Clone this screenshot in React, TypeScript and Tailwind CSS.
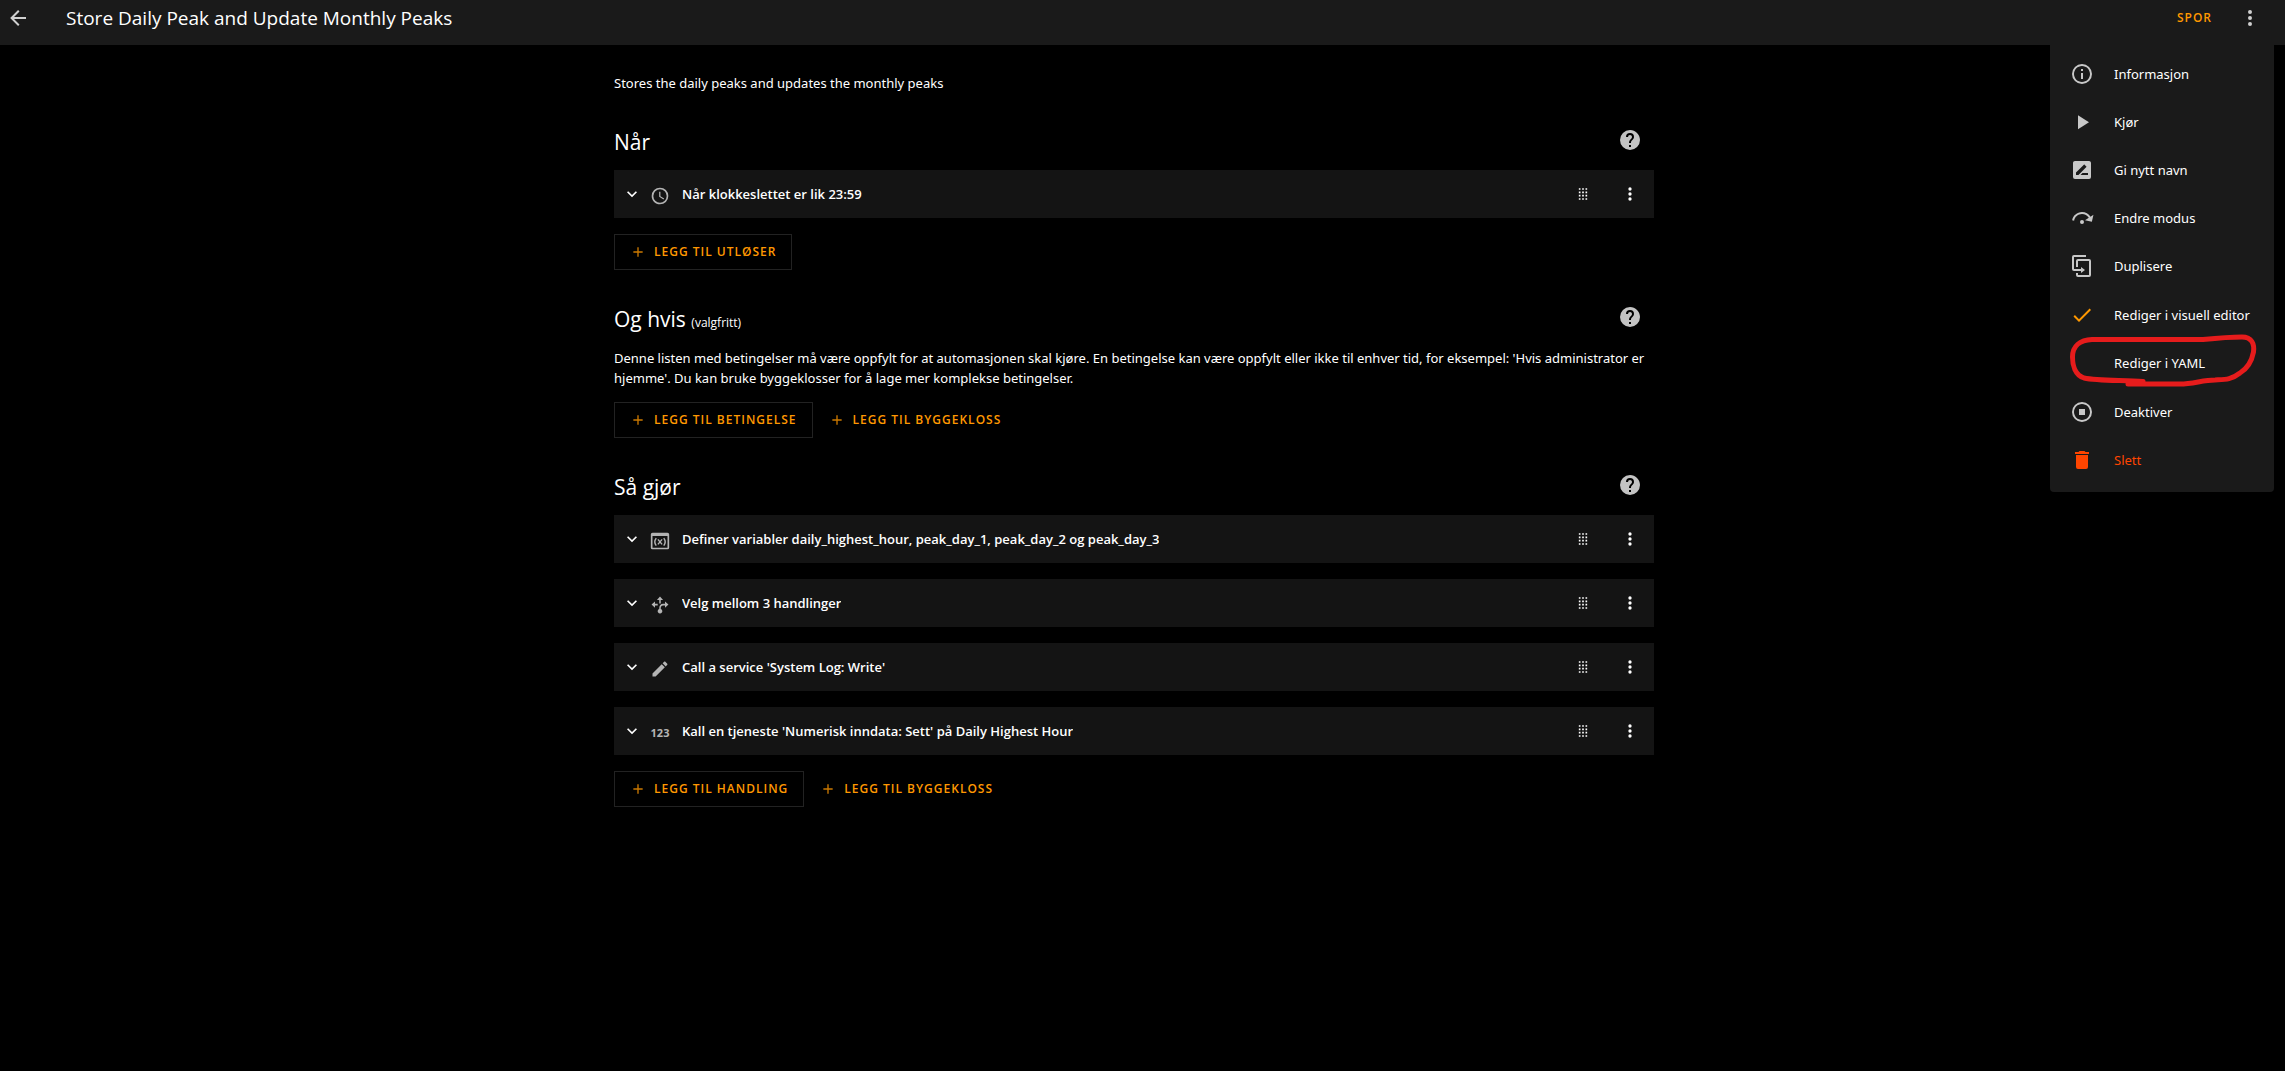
import type { ReactNode } from "react";

const icons = {
  arrowLeft:
    "M20,11V13H8L13.5,18.5L12.08,19.92L4.16,12L12.08,4.08L13.5,5.5L8,11H20Z",
  dots: "M12,16A2,2 0 0,1 14,18A2,2 0 0,1 12,20A2,2 0 0,1 10,18A2,2 0 0,1 12,16M12,10A2,2 0 0,1 14,12A2,2 0 0,1 12,14A2,2 0 0,1 10,12A2,2 0 0,1 12,10M12,4A2,2 0 0,1 14,6A2,2 0 0,1 12,8A2,2 0 0,1 10,6A2,2 0 0,1 12,4Z",
  info: "M11,9H13V7H11M12,20C7.59,20 4,16.41 4,12C4,7.59 7.59,4 12,4C16.41,4 20,7.59 20,12C20,16.41 16.41,20 12,20M12,2A10,10 0 0,0 2,12A10,10 0 0,0 12,22A10,10 0 0,0 22,12A10,10 0 0,0 12,2M11,17H13V11H11V17Z",
  play: "M8,5.14V19.14L19,12.14L8,5.14Z",
  rename:
    "M18,17H10.5L12.5,15H18M6,17V14.5L13.88,6.65C14.07,6.45 14.39,6.45 14.59,6.65L16.35,8.41C16.55,8.61 16.55,8.92 16.35,9.12L8.47,17M19,3H5C3.89,3 3,3.89 3,5V19A2,2 0 0,0 5,21H19A2,2 0 0,0 21,19V5C21,3.89 20.1,3 19,3Z",
  stepOver:
    "M12,14A2,2 0 0,1 14,16A2,2 0 0,1 12,18A2,2 0 0,1 10,16A2,2 0 0,1 12,14M23.46,8.86L21.87,15.75L15,14.16L18.8,11.78C17.39,9.5 14.87,8 12,8C8.05,8 4.77,10.86 4.12,14.63L2.15,14.28C2.96,9.58 7.06,6 12,6C15.58,6 18.73,7.89 20.5,10.72L23.46,8.86Z",
  duplicate:
    "M11,17H4A2,2 0 0,1 2,15V3A2,2 0 0,1 4,1H16V3H4V15H11V13L15,16L11,19V17M19,21V7H8V13H6V7A2,2 0 0,1 8,5H19A2,2 0 0,1 21,7V21A2,2 0 0,1 19,23H8A2,2 0 0,1 6,21V19H8V21H19Z",
  check: "M21,7L9,19L3.5,13.5L4.91,12.09L9,16.17L19.59,5.59L21,7Z",
  stop: "M12,2A10,10 0 0,0 2,12A10,10 0 0,0 12,22A10,10 0 0,0 22,12A10,10 0 0,0 12,2M12,4C16.41,4 20,7.59 20,12C20,16.41 16.41,20 12,20C7.59,20 4,16.41 4,12C4,7.59 7.59,4 12,4M9,9V15H15V9",
  trash:
    "M19,4H15.5L14.5,3H9.5L8.5,4H5V6H19M6,19A2,2 0 0,0 8,21H16A2,2 0 0,0 18,19V7H6V19Z",
  help: "M15.07,11.25L14.17,12.17C13.45,12.89 13,13.5 13,15H11V14.5C11,13.39 11.45,12.39 12.17,11.67L13.41,10.41C13.78,10.05 14,9.55 14,9C14,7.89 13.1,7 12,7A2,2 0 0,0 10,9H8A4,4 0 0,1 12,5A4,4 0 0,1 16,9C16,9.88 15.64,10.67 15.07,11.25M13,19H11V17H13M12,2A10,10 0 0,0 2,12A10,10 0 0,0 12,22A10,10 0 0,0 22,12C22,6.47 17.5,2 12,2Z",
  plus: "M19,13H13V19H11V13H5V11H11V5H13V11H19V13Z",
  chevron: "M7.41,8.58L12,13.17L16.59,8.58L18,10L12,16L6,10L7.41,8.58Z",
  clock:
    "M12,20A8,8 0 0,0 20,12A8,8 0 0,0 12,4A8,8 0 0,0 4,12A8,8 0 0,0 12,20M12,2A10,10 0 0,1 22,12A10,10 0 0,1 12,22C6.47,22 2,17.5 2,12A10,10 0 0,1 12,2M12.5,7V12.25L17,14.92L16.25,16.15L11,13V7H12.5Z",
  pencil:
    "M20.71,7.04C21.1,6.65 21.1,6 20.71,5.63L18.37,3.29C18,2.9 17.35,2.9 16.96,3.29L15.12,5.12L18.87,8.87M3,17.25V21H6.75L17.81,9.93L14.06,6.18L3,17.25Z",
  grid: "M7,19V17H9V19H7M11,19V17H13V19H11M15,19V17H17V19H15M7,15V13H9V15H7M11,15V13H13V15H11M15,15V13H17V15H15M7,11V9H9V11H7M11,11V9H13V11H11M15,11V9H17V11H15M7,7V5H9V7H7M11,7V5H13V7H11M15,7V5H17V7H15Z",
};

type IconName = keyof typeof icons;

const Icon = ({ name, className = "size-6" }: { name: IconName; className?: string }) => (
  <svg viewBox="0 0 24 24" fill="currentColor" aria-hidden="true" className={`shrink-0 ${className}`}>
    <path d={icons[name]} />
  </svg>
);

const VariableIcon = () => (
  <svg viewBox="0 0 24 24" fill="none" stroke="currentColor" aria-hidden="true" className="size-5">
    <path
      d="M21,2H3A2,2 0 0,0 1,4V20A2,2 0 0,0 3,22H21A2,2 0 0,0 23,20V4A2,2 0 0,0 21,2M21,20H3V6H21Z"
      fill="currentColor"
      stroke="none"
    />
    <path d="M7.5,8.5Q4,13 7.5,17.5M16.5,8.5Q20,13 16.5,17.5M9.5,10L14.5,16M14.5,10L9.5,16" strokeWidth="1.7" />
  </svg>
);

const ChooseIcon = () => (
  <svg viewBox="-1 -1 26 26" fill="currentColor" aria-hidden="true" className="size-5">
    <path d="M12,1L8,5.5H11V10H13V5.5H16ZM1,11.5L5.5,15.5V12.5H9V10.5H5.5V7.5ZM23,11.5L18.5,7.5V10.5H16C13,10.5 11,13 11,16V17.2A3,3 0 1,0 13,17.2V16C13,14 14.2,12.5 16,12.5H18.5V15.5Z" />
  </svg>
);

const NumericIcon = () => (
  <span aria-hidden="true" className="w-5 text-center text-[11px] leading-5 font-bold">
    123
  </span>
);

const IconButton = ({ name, label, className }: { name: IconName; label: string; className?: string }) => (
  <button type="button" aria-label={label} className="flex h-12 w-full items-center justify-center">
    <Icon name={name} className={className} />
  </button>
);

const SectionHeader = ({ title, note }: { title: string; note?: string }) => (
  <div className="mt-[23px] mb-[6px] flex h-12 items-center justify-between text-[#c3c3c3]">
    <h2 className="pt-[3px] font-['Open_Sans',sans-serif] text-[21px] leading-7 text-white">
      {title} {note && <small className="text-xs">{note}</small>}
    </h2>
    <div className="w-12">
      <IconButton name="help" label="Hjelp" />
    </div>
  </div>
);

const ActionRow = ({ icon, title }: { icon: ReactNode; title: string }) => (
  <div className="flex h-12 items-center bg-[#141414] text-white">
    <button type="button" className="flex h-full min-w-0 flex-1 items-center pl-2 text-left">
      <Icon name="chevron" className="size-5" />
      <span className="mt-1 ml-2 flex size-5 text-[#b4b4b4]">{icon}</span>
      <span className="ml-3 truncate font-['Open_Sans',sans-serif] text-[13px] leading-5 font-semibold">{title}</span>
    </button>
    <div className="grid w-[94px] grid-cols-[46px_48px]">
      <IconButton name="grid" label="Flytt" className="size-5" />
      <IconButton name="dots" label="Valg" className="size-5" />
    </div>
  </div>
);

const AddButton = ({ label, outlined }: { label: string; outlined?: boolean }) => (
  <button
    type="button"
    className={`flex h-9 items-center gap-2 border px-[15px] font-['Open_Sans',sans-serif] text-xs font-semibold tracking-[1px] text-[#ff9800] uppercase ${
      outlined ? "border-[#222222]" : "border-transparent"
    }`}
  >
    <Icon name="plus" className="size-4 opacity-80" />
    {label}
  </button>
);

const MenuItem = ({ icon, label, className = "text-white" }: { icon?: ReactNode; label: string; className?: string }) => (
  <li>
    <button type="button" className={`flex h-12 w-full items-center gap-5 px-5 text-left text-[13px] whitespace-nowrap ${className}`}>
      <span className="flex size-6">{icon}</span>
      {label}
    </button>
  </li>
);

const OverflowMenu = () => (
  <ul className="absolute top-[42px] right-[11px] w-56 rounded-b bg-[#1a1a1a] py-2">
    <MenuItem icon={<Icon name="info" className="size-6 text-[#c8c8c8]" />} label="Informasjon" />
    <MenuItem icon={<Icon name="play" className="size-6 text-[#c8c8c8]" />} label="Kjør" />
    <MenuItem icon={<Icon name="rename" className="size-6 text-[#c8c8c8]" />} label="Gi nytt navn" />
    <MenuItem icon={<Icon name="stepOver" className="size-6 text-[#c8c8c8]" />} label="Endre modus" />
    <MenuItem icon={<Icon name="duplicate" className="size-6 text-[#c8c8c8]" />} label="Duplisere" />
    <li role="separator" className="h-px" />
    <MenuItem icon={<Icon name="check" className="size-6 text-[#ff9800]" />} label="Rediger i visuell editor" />
    <MenuItem label="Rediger i YAML" />
    <li role="separator" className="h-px" />
    <MenuItem icon={<Icon name="stop" className="size-6 text-[#c8c8c8]" />} label="Deaktiver" />
    <MenuItem icon={<Icon name="trash" />} label="Slett" className="text-[#ff4500]" />
    <svg
      viewBox="0 0 190 56"
      fill="none"
      stroke="#e61c1c"
      strokeWidth="5"
      strokeLinecap="round"
      strokeLinejoin="round"
      aria-hidden="true"
      className="pointer-events-none absolute top-[292px] left-[18px] h-14 w-[190px]"
    >
      <path d="M75,47.5C55,46 30,47 16,44C7,41 4.500,31 4.500,23C4.500,12 12,6 24,5.500H135C150,4 165,3 174,3C184,3 186.500,10 185.500,18C184,26 180,34 172,39C163,46 157,45.500 147,46C135,46 125,50 112,50H60" />
    </svg>
  </ul>
);

const App = () => {
  return (
    <div className="relative min-h-screen bg-black font-['Noto_Sans',sans-serif] text-[13px] leading-5 text-white">
      <header className="flex h-[45px] items-start bg-[#1a1a1a] pr-[11px] pl-[6px] font-['Open_Sans',sans-serif]">
        <button type="button" aria-label="Tilbake" className="flex h-9 w-6 items-center justify-center text-[#d0d0d0]">
          <Icon name="arrowLeft" />
        </button>
        <h1 className="ml-9 flex-1 text-[19px] leading-9">Store Daily Peak and Update Monthly Peaks</h1>
        <button type="button" className="h-9 px-2 text-xs font-semibold tracking-[1px] text-[#ff9800] uppercase">
          Spor
        </button>
        <button type="button" aria-label="Meny" className="ml-[6px] flex h-9 w-12 items-center justify-center text-[#d0d0d0]">
          <Icon name="dots" />
        </button>
      </header>

      <main className="pr-[17px]">
        <div className="mx-auto max-w-[1040px] pt-7">
          <p>Stores the daily peaks and updates the monthly peaks</p>

          <SectionHeader title="Når" />
          <ActionRow icon={<Icon name="clock" className="size-5" />} title="Når klokkeslettet er lik 23:59" />
          <div className="mt-4 flex">
            <AddButton label="Legg til utløser" outlined />
          </div>

          <SectionHeader title="Og hvis" note="(valgfritt)" />
          <p className="pt-px">
            Denne listen med betingelser må være oppfylt for at automasjonen skal kjøre. En betingelse kan være oppfylt
            eller ikke til enhver tid, for eksempel: 'Hvis administrator er hjemme'. Du kan bruke byggeklosser for å lage
            mer komplekse betingelser.
          </p>
          <div className="mt-[14px] flex">
            <AddButton label="Legg til betingelse" outlined />
            <AddButton label="Legg til byggekloss" />
          </div>

          <SectionHeader title="Så gjør" />
          <div className="flex flex-col gap-4">
            <ActionRow
              icon={<VariableIcon />}
              title="Definer variabler daily_highest_hour, peak_day_1, peak_day_2 og peak_day_3"
            />
            <ActionRow icon={<ChooseIcon />} title="Velg mellom 3 handlinger" />
            <ActionRow icon={<Icon name="pencil" className="size-5" />} title="Call a service 'System Log: Write'" />
            <ActionRow icon={<NumericIcon />} title="Kall en tjeneste 'Numerisk inndata: Sett' på Daily Highest Hour" />
          </div>
          <div className="mt-4 flex">
            <AddButton label="Legg til handling" outlined />
            <AddButton label="Legg til byggekloss" />
          </div>
        </div>
      </main>

      <OverflowMenu />
    </div>
  );
};

export default App;
